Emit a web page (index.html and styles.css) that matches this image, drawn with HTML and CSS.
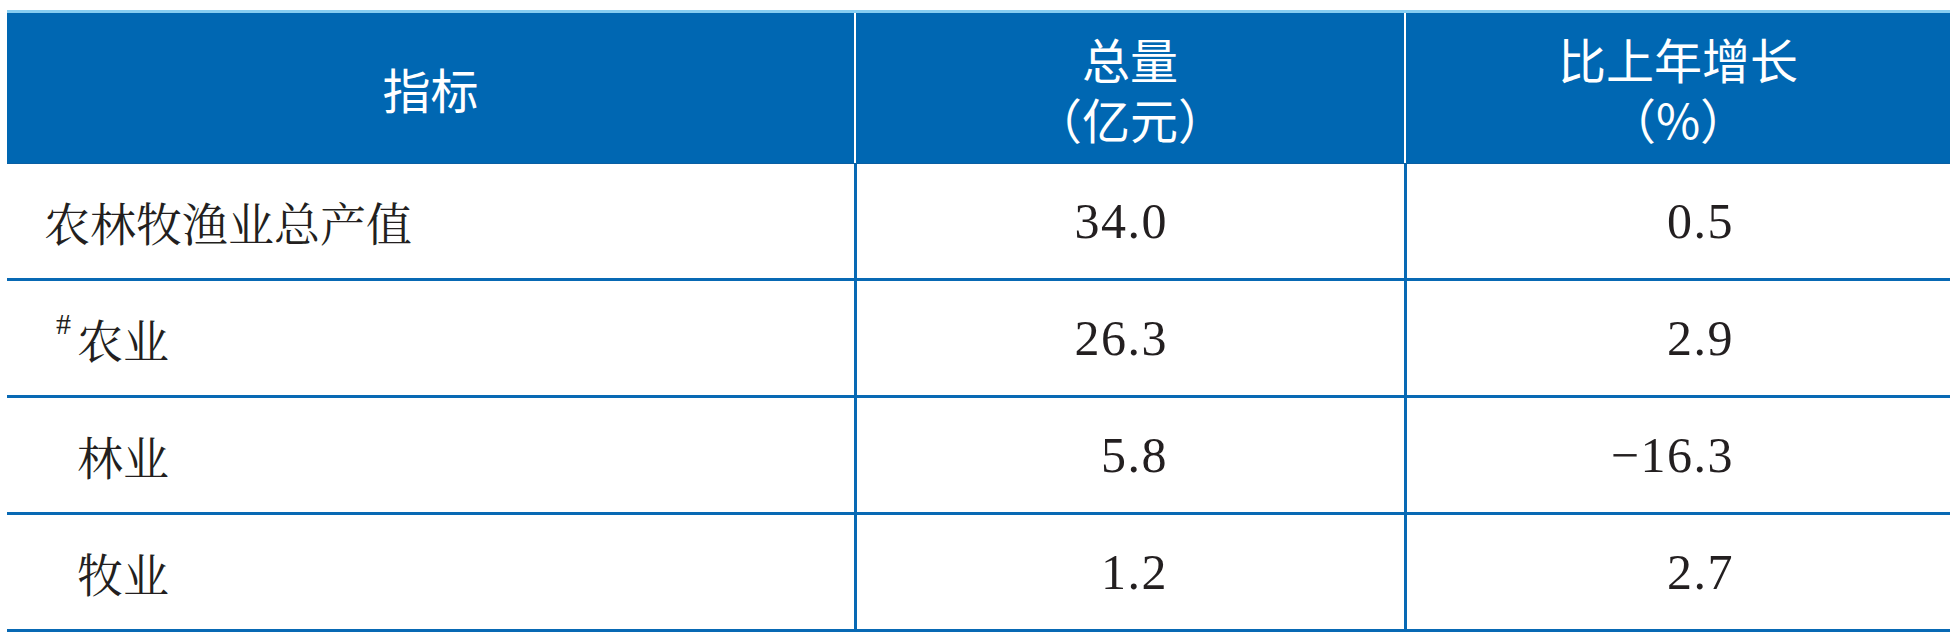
FILE: index.html
```html
<!DOCTYPE html>
<html lang="zh-CN">
<head>
<meta charset="utf-8">
<title>农林牧渔业总产值</title>
<link rel="stylesheet" href="styles.css">
</head>
<body>
<div class="table">
  <div class="head">
    <div class="hcell">指标</div>
    <div class="hcell sep"><span class="hline">总量</span><span class="hline">（亿元）</span></div>
    <div class="hcell sep"><span class="hline">比上年增长</span><span class="hline">（%）</span></div>
  </div>
  <div class="row">
    <div class="cell name">农林牧渔业总产值</div>
    <div class="cell num c2">34.0</div>
    <div class="cell num c3">0.5</div>
  </div>
  <div class="row">
    <div class="cell name sub-mark"><span class="mark">#</span>农业</div>
    <div class="cell num c2">26.3</div>
    <div class="cell num c3">2.9</div>
  </div>
  <div class="row">
    <div class="cell name sub">林业</div>
    <div class="cell num c2">5.8</div>
    <div class="cell num c3">−16.3</div>
  </div>
  <div class="row">
    <div class="cell name sub">牧业</div>
    <div class="cell num c2">1.2</div>
    <div class="cell num c3">2.7</div>
  </div>
</div>
</body>
</html>
```
FILE: styles.css
```css
html, body {
  margin: 0;
  padding: 0;
  background: #ffffff;
}

body {
  padding: 10px 0 0 7px;
}

.table {
  width: 1943px;
  border-top: 3px solid #86cdf1;
}

.head,
.row {
  display: grid;
  grid-template-columns: 847px 550px 1fr;
}

.head {
  height: 151px;
  background: #0067b2;
  border-bottom: 1px solid #0a5fa3;
  box-sizing: border-box;
}

.hcell {
  display: flex;
  flex-direction: column;
  align-items: center;
  justify-content: center;
  gap: 0;
  text-align: center;
  color: #ffffff;
  font-family: "Noto Sans CJK SC", "Noto Sans", sans-serif;
  font-size: 48px;
  line-height: 60px;
}

.hline {
  display: block;
  height: 60px;
  line-height: 60px;
}

.hcell.sep {
  border-left: 2px solid #ffffff;
}

.row {
  height: 117px;
  border-bottom: 3px solid #0869b4;
  box-sizing: border-box;
}

.cell {
  display: flex;
  align-items: center;
  color: #231f20;
}

.name {
  font-family: "Noto Serif CJK SC", "Source Han Serif SC", "AR PL UMing CN", "Noto Sans CJK SC", serif;
  font-size: 46px;
  padding-left: 37px;
}

.name.sub {
  padding-left: 70px;
}

.name.sub-mark {
  padding-left: 49px;
}

.mark {
  font-family: "Liberation Serif", serif;
  font-size: 30px;
  align-self: center;
  margin-top: -28px;
  margin-right: 6px;
}

.num {
  justify-content: flex-end;
  font-family: "Liberation Serif", "Times New Roman", serif;
  font-size: 50px;
  letter-spacing: 1.5px;
  border-left: 3px solid #0869b4;
}

.num.c2 {
  padding-right: 236px;
}

.num.c3 {
  padding-right: 216px;
}
```
